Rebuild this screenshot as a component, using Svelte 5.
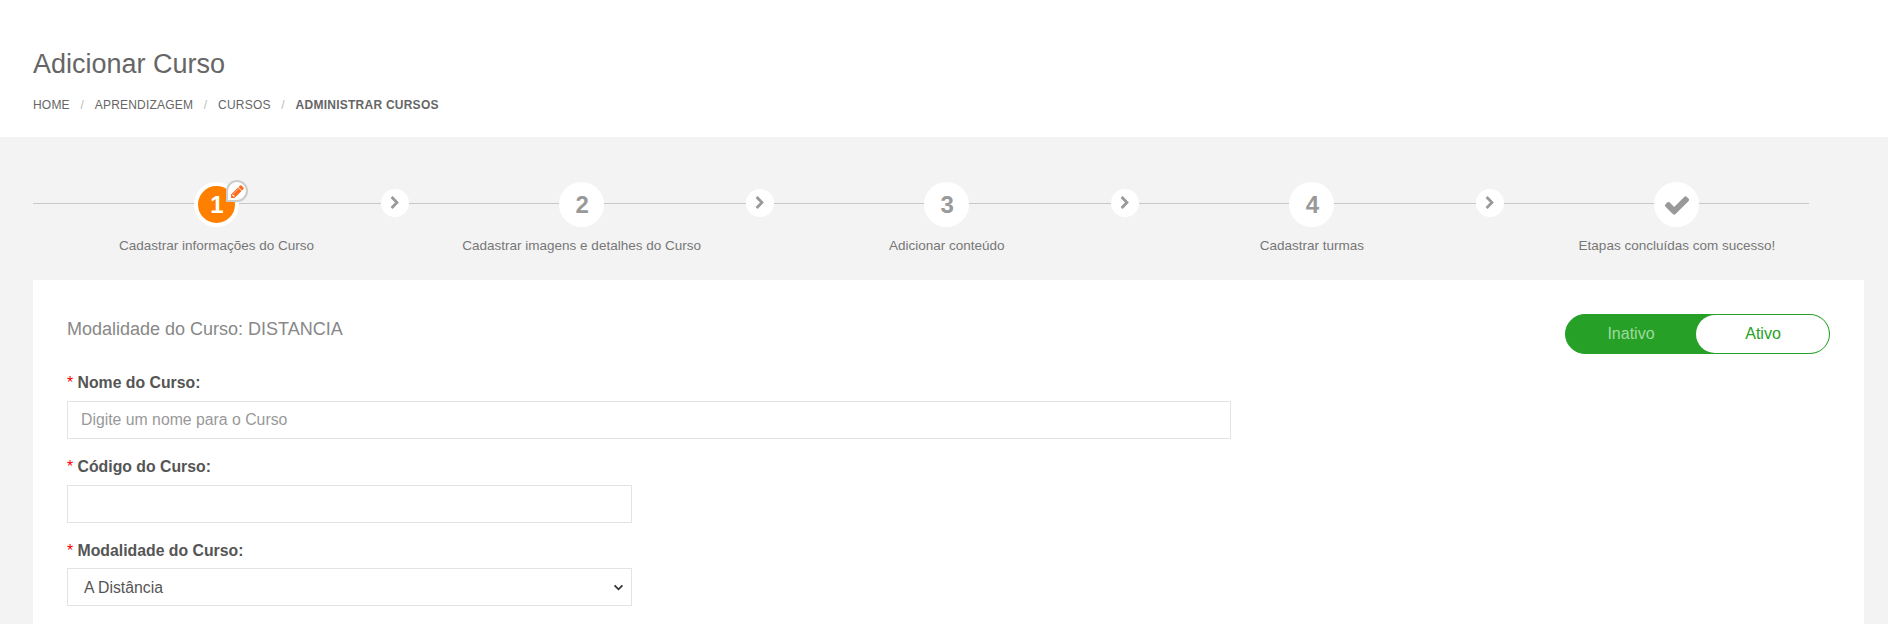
<script>
  const crumbs = ['Home', 'Aprendizagem', 'Cursos'];
  const steps = [
    { mark: '1', label: 'Cadastrar informações do Curso', active: true },
    { mark: '2', label: 'Cadastrar imagens e detalhes do Curso' },
    { mark: '3', label: 'Adicionar conteúdo' },
    { mark: '4', label: 'Cadastrar turmas' },
    { label: 'Etapas concluídas com sucesso!', done: true }
  ];
</script>

<header class="page-head">
  <h1>Adicionar Curso</h1>
  <nav class="crumbs">
    {#each crumbs as crumb}
      <span>{crumb}</span><i>/</i>
    {/each}
    <b>Administrar Cursos</b>
  </nav>
</header>

<main class="page-body">
  <ol class="steps">
    {#each steps as step, i}
      <li class="step">
        <div class="circle" class:active={step.active}>
          {#if step.done}
            <svg class="check" viewBox="0 0 1792 1792"><path d="M1671 566q0 40-28 68l-724 724-136 136q-28 28-68 28t-68-28l-136-136-362-362q-28-28-28-68t28-68l136-136q28-28 68-28t68 28l294 295 656-657q28-28 68-28t68 28l136 136q28 28 28 68z"/></svg>
          {:else}
            <span>{step.mark}</span>
          {/if}
          {#if step.active}
            <div class="edit-badge">
              <svg viewBox="0 0 1792 1792"><path d="M491 1536l91-91-235-235-91 91v107h128v128h107zm523-928q0-22-22-22-10 0-17 7l-542 542q-7 7-7 17 0 22 22 22 10 0 17-7l542-542q7-7 7-17zm-54-192l416 416-832 832h-416v-416zm683 96q0 53-37 90l-166 166-416-416 166-165q36-38 90-38 53 0 91 38l235 234q37 39 37 91z"/></svg>
            </div>
          {/if}
        </div>
        <p>{step.label}</p>
        {#if i < steps.length - 1}
          <div class="next">
            <svg viewBox="0 0 1792 1792"><path d="M1363 877l-742 742q-19 19-45 19t-45-19l-166-166q-19-19-19-45t19-45l531-531-531-531q-19-19-19-45t19-45l166-166q19-19 45-19t45 19l742 742q19 19 19 45t-19 45z"/></svg>
          </div>
        {/if}
      </li>
    {/each}
  </ol>

  <section class="card">
    <div class="card-top">
      <h2>Modalidade do Curso: DISTANCIA</h2>
      <div class="toggle">
        <span class="off">Inativo</span>
        <span class="on">Ativo</span>
      </div>
    </div>

    <div class="field wide">
      <label for="nome"><em>*</em> Nome do Curso:</label>
      <input id="nome" type="text" placeholder="Digite um nome para o Curso" />
    </div>
    <div class="field">
      <label for="codigo"><em>*</em> Código do Curso:</label>
      <input id="codigo" type="text" />
    </div>
    <div class="field">
      <label for="modalidade"><em>*</em> Modalidade do Curso:</label>
      <div class="select-wrap">
        <select id="modalidade">
          <option>A Distância</option>
        </select>
        <svg viewBox="0 0 12 8"><path d="M1.5 1.5 6 6l4.5-4.5"/></svg>
      </div>
    </div>
  </section>
</main>

<style>
  :global(body) {
    margin: 0;
    background: #f3f3f3;
    font-family: "Liberation Sans", Arial, sans-serif;
    overflow: hidden;
  }

  .page-head {
    height: 137px;
    box-sizing: border-box;
    padding: 48px 33px 0;
    background: #fff;
  }

  h1 {
    margin: 0;
    font-size: 27px;
    line-height: 32px;
    font-weight: 400;
    color: #666;
  }

  .crumbs {
    display: flex;
    margin-top: 17px;
    font-size: 12px;
    line-height: 16px;
    letter-spacing: 0.2px;
    text-transform: uppercase;
    color: #666;
  }

  .crumbs i {
    margin: 0 10.7px;
    font-style: normal;
    color: #bbb;
  }

  .crumbs b {
    letter-spacing: 0.25px;
  }

  .page-body {
    padding: 0 24px 0 33px;
  }

  .steps {
    position: relative;
    display: grid;
    grid-template-columns: repeat(5, 365.1px);
    margin: 0;
    padding: 45px 0 0 1px;
    list-style: none;
  }

  /* the rail running behind the circles */
  .steps::before {
    content: '';
    position: absolute;
    left: 0;
    top: 66px;
    width: 1776px;
    height: 1px;
    background: #c8c8c8;
  }

  .step {
    position: relative;
    display: flex;
    flex-direction: column;
    align-items: center;
    height: 98px;
  }

  .step p {
    margin: 9px 0 0;
    font-size: 13.5px;
    line-height: 20px;
    color: #777;
  }

  .circle {
    position: relative;
    display: flex;
    align-items: center;
    justify-content: center;
    box-sizing: border-box;
    width: 45px;
    height: 45px;
    border: 4px solid #fff;
    border-radius: 50%;
    background: #fff;
    color: #999;
    font-size: 24px;
    font-weight: 700;
  }

  .circle span {
    padding-left: 1px;
  }

  .circle.active {
    background: #ff8000;
    color: #fff;
  }

  .check {
    width: 28px;
    height: 28px;
    fill: #999;
  }

  .edit-badge {
    position: absolute;
    top: -6px;
    right: -13px;
    display: flex;
    align-items: center;
    justify-content: center;
    box-sizing: border-box;
    width: 22px;
    height: 22px;
    border: 2px solid #ccc;
    border-radius: 50% 50% 50% 0;
    background: #fff;
  }

  .edit-badge svg {
    width: 15px;
    height: 15px;
    fill: #ff6a1a;
  }

  .next {
    position: absolute;
    top: 7px;
    right: -10px;
    display: flex;
    align-items: center;
    justify-content: center;
    width: 28px;
    height: 28px;
    border-radius: 50%;
    background: #fff;
  }

  .next svg {
    width: 14px;
    height: 14px;
    fill: #999;
  }

  .card {
    box-sizing: border-box;
    height: 344px;
    padding: 34px 34px 0;
    background: #fff;
  }

  .card-top {
    display: flex;
    justify-content: space-between;
    height: 59px;
  }

  h2 {
    margin: 0;
    padding-top: 1px;
    font-size: 18px;
    line-height: 28px;
    font-weight: 400;
    color: #888;
  }

  .toggle {
    display: flex;
    box-sizing: border-box;
    width: 265px;
    height: 40px;
    border: 1px solid #26a026;
    border-radius: 20px;
    background: #26a026;
    font-size: 16px;
    line-height: 38px;
    text-align: center;
  }

  .toggle span {
    flex: 1;
  }

  .toggle .off {
    flex: 0 0 130px;
    color: #9fdb9f;
  }

  .on {
    padding-left: 1px;
    border-radius: 20px;
    background: #fff;
    color: #26a026;
  }

  .field {
    width: 565px;
    margin-bottom: 18px;
  }

  .field:last-child {
    margin-bottom: 0;
  }

  .field:last-child label {
    margin-bottom: 7px;
  }

  .field.wide {
    width: 1164px;
  }

  label {
    display: block;
    height: 20px;
    margin-bottom: 8px;
    font-size: 15.8px;
    line-height: 20px;
    font-weight: 700;
    color: #555;
  }

  label em {
    font-style: normal;
    font-weight: 400;
    color: #f00;
  }

  input,
  select {
    display: block;
    box-sizing: border-box;
    width: 100%;
    height: 38px;
    padding: 0 13px;
    border: 1px solid #e3e3e3;
    background: #fff;
    font-family: inherit;
    font-size: 15.8px;
    color: #555;
    outline: none;
    border-radius: 0;
  }

  input::placeholder {
    color: #999;
  }

  select {
    appearance: none;
    padding-left: 16px;
  }

  .select-wrap {
    position: relative;
  }

  .select-wrap svg {
    position: absolute;
    top: 16px;
    right: 8px;
    width: 11px;
    height: 7px;
    fill: none;
    stroke: #333;
    stroke-width: 2;
    pointer-events: none;
  }
</style>
